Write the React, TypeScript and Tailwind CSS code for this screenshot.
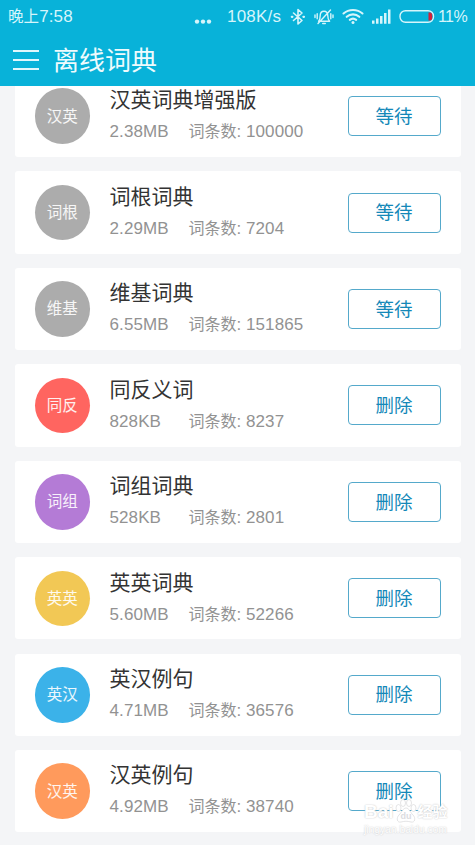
import type { ReactNode } from 'react'

type Dictionary = {
  name: string
  badge: string
  color: string
  size: string
  entries: number
  action: string
}

const dictionaries: Dictionary[] = [
  { name: '汉英词典增强版', badge: '汉英', color: 'bg-[#acacac]', size: '2.38MB', entries: 100000, action: '等待' },
  { name: '词根词典', badge: '词根', color: 'bg-[#acacac]', size: '2.29MB', entries: 7204, action: '等待' },
  { name: '维基词典', badge: '维基', color: 'bg-[#acacac]', size: '6.55MB', entries: 151865, action: '等待' },
  { name: '同反义词', badge: '同反', color: 'bg-[#ff6560]', size: '828KB', entries: 8237, action: '删除' },
  { name: '词组词典', badge: '词组', color: 'bg-[#b47bd6]', size: '528KB', entries: 2801, action: '删除' },
  { name: '英英词典', badge: '英英', color: 'bg-[#f2c855]', size: '5.60MB', entries: 52266, action: '删除' },
  { name: '英汉例句', badge: '英汉', color: 'bg-[#3bb2e9]', size: '4.71MB', entries: 36576, action: '删除' },
  { name: '汉英例句', badge: '汉英', color: 'bg-[#ff9a5c]', size: '4.92MB', entries: 38740, action: '删除' },
]

function StatusIcon({ width, className, children }: { width: number; className?: string; children: ReactNode }) {
  return (
    <svg
      width={width}
      height="20"
      viewBox={`0 0 ${width} 20`}
      fill="none"
      stroke="currentColor"
      strokeWidth="1.6"
      strokeLinecap="round"
      strokeLinejoin="round"
      className={`shrink-0 ${className ?? ''}`}
    >
      {children}
    </svg>
  )
}

function StatusBar() {
  return (
    <div className="flex h-[34px] items-center pl-2 text-[17px] whitespace-nowrap text-[#d6f5fb]">
      <span className="w-[186px] tracking-[0.1px]">
        <span className="text-[15.5px]">晚上</span>7:58
      </span>
      <StatusIcon width={18}>
        <g fill="currentColor" stroke="none">
          <circle cx="3" cy="14.6" r="2.2" />
          <circle cx="9" cy="14.6" r="2.2" />
          <circle cx="15" cy="14.6" r="2.2" />
        </g>
      </StatusIcon>
      <span className="ml-[15px] w-[63px] tracking-[0.2px]">108K/s</span>
      {/* bluetooth */}
      <StatusIcon width={16}>
        <path d="M3.5 6l8.5 7.5L8 17V2.5L12 6l-8.5 7.5" />
        <path d="M1.8 9.8h.6M13.4 9.8h.6" strokeWidth="2.2" />
      </StatusIcon>
      {/* muted, vibrating bell */}
      <StatusIcon width={20} className="ml-2">
        <path
          d="M4.6 14.2h11c-1.3-1.4-1.8-2.5-1.8-5.4 0-3-1.4-4.6-3.8-4.6S6.200 5.800 6.200 8.800c0 2.900-.3 4-1.600 5.400zM8.700 16.500h2.600M4 16.500L16.500 3M3.200 6.800v5M1 8v2.600M16.800 6.800v5M19 8v2.600"
          strokeWidth="1.4"
        />
      </StatusIcon>
      {/* wifi */}
      <StatusIcon width={22} className="ml-2">
        <path d="M1.5 6.5c5.3-4.7 13.7-4.7 19 0M4.7 9.8c3.6-3.2 9-3.2 12.6 0M7.8 12.9c1.9-1.6 4.5-1.6 6.4 0" strokeWidth="2.1" />
        <circle cx="11" cy="15.6" r="1.5" fill="currentColor" stroke="none" />
      </StatusIcon>
      {/* signal */}
      <StatusIcon width={20} className="ml-2">
        <path
          d="M0 13.5h2.5v3.3H0zM4 11.5h2.5v5.3H4zM8 9h2.5v7.8H8zM12 6h2.5v10.8H12zM16 2.5h2.5v14.3H16z"
          fill="currentColor"
          stroke="none"
        />
      </StatusIcon>
      {/* battery */}
      <StatusIcon width={36} className="ml-[7px]">
        <rect x="1" y="3.7" width="33.5" height="11.6" rx="5.5" strokeWidth="1.4" />
        <path d="M29.5 5.5h1.300c1.800 0 2.500 1.500 2.500 4s-.7 4-2.500 4h-1.300z" fill="#d3203a" stroke="none" />
      </StatusIcon>
      <span className="ml-[3px] text-[16px] tracking-[-0.6px]">11%</span>
    </div>
  )
}

function DictionaryCard({ item }: { item: Dictionary }) {
  return (
    <li className="flex h-[82.3px] shrink-0 items-center rounded-[3px] bg-white pr-5 pl-5">
      <div className={`flex size-[55.5px] shrink-0 items-center justify-center rounded-full text-[15.5px] text-white/90 ${item.color}`}>
        {item.badge}
      </div>
      <div className="ml-[19.5px] flex-1 pt-[1.5px]">
        <h2 className="text-[21px] leading-[30px] text-[#333]">{item.name}</h2>
        <div className="flex text-[17px] leading-[33px] text-[#929292]">
          <span className="w-[79px] tracking-[0.1px]">{item.size}</span>
          <span>
            <span className="text-[16px]">词条数</span>: <span className="tracking-[0.1px]">{item.entries}</span>
          </span>
        </div>
      </div>
      <button className="h-10 w-[93px] rounded-[4px] border border-[#55a9cb] pt-px text-[18.5px] text-[#1488b8]">
        {item.action}
      </button>
    </li>
  )
}

export default function App() {
  return (
    <div className="relative flex h-[845px] w-[475px] flex-col overflow-hidden bg-[#f4f5f7] font-['Liberation_Sans','Noto_Sans_CJK_SC',sans-serif]">
      <header className="h-[85.5px] shrink-0 bg-[#08b2d9]">
        <StatusBar />
        <div className="flex h-[52px] items-center pl-[13px]">
          <div className="flex w-[26px] flex-col gap-[7px]">
            <span className="h-[2px] bg-[#e0f7fc]" />
            <span className="h-[2px] bg-[#e0f7fc]" />
            <span className="h-[2px] bg-[#e0f7fc]" />
          </div>
          <h1 className="ml-[14px] pt-[2px] text-[26px] leading-none text-[#eefbfd]">离线词典</h1>
        </div>
      </header>

      <main className="min-h-0 flex-1 overflow-hidden px-[14.5px]">
        <ul className="-mt-[10.5px] flex flex-col gap-[14.15px]">
          {dictionaries.map((item) => (
            <DictionaryCard key={item.name} item={item} />
          ))}
        </ul>
      </main>

      {/* watermark */}
      <div className="absolute top-[799px] left-[364px] w-[86px] text-white [text-shadow:0_0_1.5px_#b8b8ba]">
        <div className="flex items-center text-[19px] leading-[26px] font-bold">
          <span>Bai</span>
          <svg width="24" height="26" viewBox="0 0 22 26" fill="#fff" stroke="#d8d8da" strokeWidth=".7">
            <ellipse cx="3.5" cy="9" rx="2.5" ry="3.5" />
            <ellipse cx="8" cy="4" rx="2.5" ry="3.5" />
            <ellipse cx="14" cy="4" rx="2.5" ry="3.5" />
            <ellipse cx="18.5" cy="9" rx="2.5" ry="3.5" />
            <path d="M11 9c3 0 4 4 7 7s2 8-2 7c-4-1-6-1-10 0-4 1-5-4-2-7s4-7 7-7z" />
            <text x="5.5" y="20" fontSize="9" stroke="none" fill="#dcdcdf" className="[text-shadow:none]">du</text>
          </svg>
          <span className="text-[15px]">经验</span>
        </div>
        <div className="text-[10.5px] leading-[9px] tracking-[-0.1px]">jingyan.baidu.com</div>
      </div>
    </div>
  )
}
